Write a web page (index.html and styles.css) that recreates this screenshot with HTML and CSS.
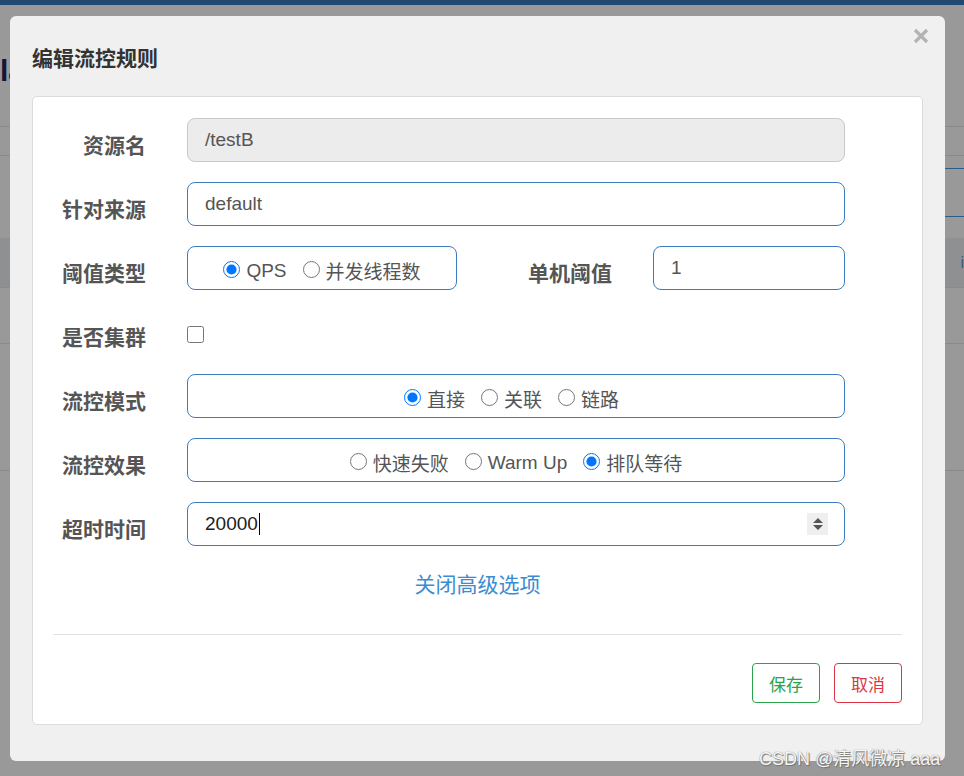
FILE: index.html
```html
<!DOCTYPE html>
<html lang="zh-CN">
<head>
<meta charset="utf-8">
<title>编辑流控规则</title>
<link rel="stylesheet" href="styles.css">
</head>
<body>
<div class="page">
  <div class="topbar"></div>
  <div class="hdr"><span class="brand">la</span></div>
  <div class="bgrow h28"></div>
  <div class="toolbar"><div class="select"><span class="caret-dn"></span></div></div>
  <div class="band"><span class="band-ico">i</span></div>
  <div class="bgrow h56"></div>
  <div class="bgrow h127"></div>
</div>

<div class="modal">
  <div class="modal-head">
    <h4 class="modal-title">编辑流控规则</h4>
    <span class="close" aria-label="close">
      <svg width="16" height="16" viewBox="0 0 16 16"><path d="M2 2 L14 14 M14 2 L2 14" stroke="#b3b3b3" stroke-width="3.2" stroke-linecap="butt"/></svg>
    </span>
  </div>
  <div class="panel">
    <div class="form">
      <div class="row">
        <span class="lbl">资源名</span>
        <div class="field disabled">/testB</div>
      </div>
      <div class="row">
        <span class="lbl">针对来源</span>
        <div class="field">default</div>
      </div>
      <div class="row">
        <span class="lbl">阈值类型</span>
        <div class="field radios short">
          <label class="opt"><input type="radio" name="grade" checked>QPS</label>
          <label class="opt"><input type="radio" name="grade">并发线程数</label>
        </div>
        <span class="lbl lbl2">单机阈值</span>
        <div class="field grow">1</div>
      </div>
      <div class="row">
        <span class="lbl">是否集群</span>
        <div class="chk-wrap"><input type="checkbox" class="chk"></div>
      </div>
      <div class="row">
        <span class="lbl">流控模式</span>
        <div class="field radios mode">
          <label class="opt"><input type="radio" name="mode" checked>直接</label>
          <label class="opt"><input type="radio" name="mode">关联</label>
          <label class="opt"><input type="radio" name="mode">链路</label>
        </div>
      </div>
      <div class="row">
        <span class="lbl">流控效果</span>
        <div class="field radios">
          <label class="opt"><input type="radio" name="eff">快速失败</label>
          <label class="opt"><input type="radio" name="eff">Warm Up</label>
          <label class="opt"><input type="radio" name="eff" checked>排队等待</label>
        </div>
      </div>
      <div class="row">
        <span class="lbl">超时时间</span>
        <div class="field num">20000<span class="cursor"></span>
          <span class="spin"><svg width="12" height="16" viewBox="0 0 12 16"><path d="M6 2 L11 7 L1 7 Z M1 9 L11 9 L6 14 Z" fill="#555"/></svg></span>
        </div>
      </div>
    </div>
    <div class="adv"><a class="adv-link">关闭高级选项</a></div>
    <div class="divider"></div>
    <div class="footer">
      <button class="btn save">保存</button>
      <button class="btn cancel">取消</button>
    </div>
  </div>
</div>

<div class="watermark">CSDN @清风微凉 aaa</div>
</body>
</html>
```
FILE: styles.css
```css
* { box-sizing: border-box; }
html, body { margin: 0; padding: 0; }
body {
  width: 964px;
  height: 776px;
  overflow: hidden;
  background: #999999;
  font-family: "Liberation Sans", "Noto Sans CJK SC", sans-serif;
  position: relative;
}

/* dimmed background page */
.page { width: 964px; }
.topbar { height: 5px; background: #1f4a72; }
.hdr { height: 122px; padding-top: 48px; border-bottom: 1px solid #8a8a8a; overflow: hidden; }
.brand {
  display: block;
  font-size: 30px;
  font-weight: bold;
  color: #15153a;
  line-height: 36px;
}
.bgrow { border-bottom: 1px solid #8a8a8a; }
.h28 { height: 29px; }
.toolbar { height: 82px; display: flex; justify-content: flex-end; padding-top: 12px; }
.select {
  width: 60px; height: 49px; margin-right: -40px;
  border-top: 1px solid #2c5c8a; border-bottom: 1px solid #2c5c8a;
  position: relative;
}
.caret-dn {
  position: absolute; left: 38px; top: 20px;
  border-left: 5px solid transparent; border-right: 5px solid transparent;
  border-top: 5px solid #444;
}
.band { height: 50px; background: #8f9091; border-bottom: 1px solid #8a8a8a; display: flex; justify-content: flex-end; align-items: center; }
.band-ico { color: #3a5a8a; font-size: 16px; margin-right: 0; }
.h56 { height: 56px; }
.h127 { height: 127px; }

/* modal */
.modal {
  position: absolute;
  left: 10px; top: 16px;
  width: 935px; height: 745px;
  background: #f0f0f0;
  border-radius: 6px;
  padding: 0 22px 36px;
}
.modal-head { height: 80px; display: flex; align-items: center; justify-content: space-between; }
.modal-title {
  margin: 0;
  padding-top: 2px;
  font-size: 21px;
  font-weight: bold;
  color: #333;
  font-family: "Noto Sans CJK SC", sans-serif;
}
.close { position: absolute; right: 16px; top: 12px; display: block; line-height: 0; }

.panel {
  background: #fff;
  border: 1px solid #dcdcdc;
  border-radius: 5px;
  padding: 21px 0 21px;
}
.form { padding-right: 77px; display: flex; flex-direction: column; gap: 20px; }
.row { display: flex; align-items: center; height: 44px; }
.lbl {
  width: 113px;
  flex: none;
  text-align: right;
  font-size: 21px;
  font-weight: bold;
  color: #555;
  padding-top: 7px;
  margin-right: 41px;
  font-family: "Noto Sans CJK SC", sans-serif;
}
.lbl2 { width: 155px; }
.field {
  flex: 1;
  height: 44px;
  border: 1px solid #3a7bbf;
  border-radius: 8px;
  padding: 0 17px;
  display: flex;
  align-items: center;
  font-size: 19px;
  color: #555;
  background: #fff;
}
.field.disabled { background: #ececec; border-color: #c8c8c8; }
.field.short { flex: none; width: 270px; margin-right: 0; }
.field.grow { flex: 1; }
.radios { justify-content: center; padding-top: 5px; }
.radios.mode { padding-right: 26px; }
.opt {
  display: inline-flex;
  align-items: center;
  gap: 6px;
  margin: 0 8px;
  font-size: 19px;
  color: #555;
  font-family: "Liberation Sans", "Noto Sans CJK SC", sans-serif;
}
.opt input { width: 17px; height: 17px; margin: 0 0 2px; }
.chk-wrap { padding-top: 4px; display: flex; }
.chk { width: 17px; height: 17px; margin: 0; }
.num { position: relative; color: #222; }
.cursor { display: inline-block; width: 1px; height: 22px; background: #000; margin-left: 1px; }
.spin {
  position: absolute; right: 16px; top: 10px;
  width: 21px; height: 22px; background: #efefef;
  display: flex; align-items: center; justify-content: center;
}

.adv { text-align: center; margin-top: 25px; line-height: 24px; height: 24px; }
.adv-link { font-size: 21px; color: #3c8dd0; font-family: "Noto Sans CJK SC", sans-serif; text-decoration: none; }
.divider { margin: 39px 20px 0; border-top: 1px solid #e2e2e2; }
.footer { display: flex; justify-content: flex-end; gap: 14px; padding: 28px 20px 0; }
.btn {
  width: 68px; height: 40px;
  background: #fff;
  border: 1px solid;
  border-radius: 4px;
  font-size: 17px;
  font-family: "Noto Sans CJK SC", sans-serif;
  padding: 0;
}
.save { color: #2aa34a; border-color: #2aa34a; }
.cancel { color: #dc3545; border-color: #dc3545; }

.watermark {
  position: absolute;
  left: 759px; top: 744px;
  font-size: 18px;
  color: #f6f6f6;
  text-shadow: 0 0 1px #666, 1px 1px 1px #777;
  white-space: nowrap;
  font-family: "Liberation Sans", "Noto Sans CJK SC", sans-serif;
}
```
